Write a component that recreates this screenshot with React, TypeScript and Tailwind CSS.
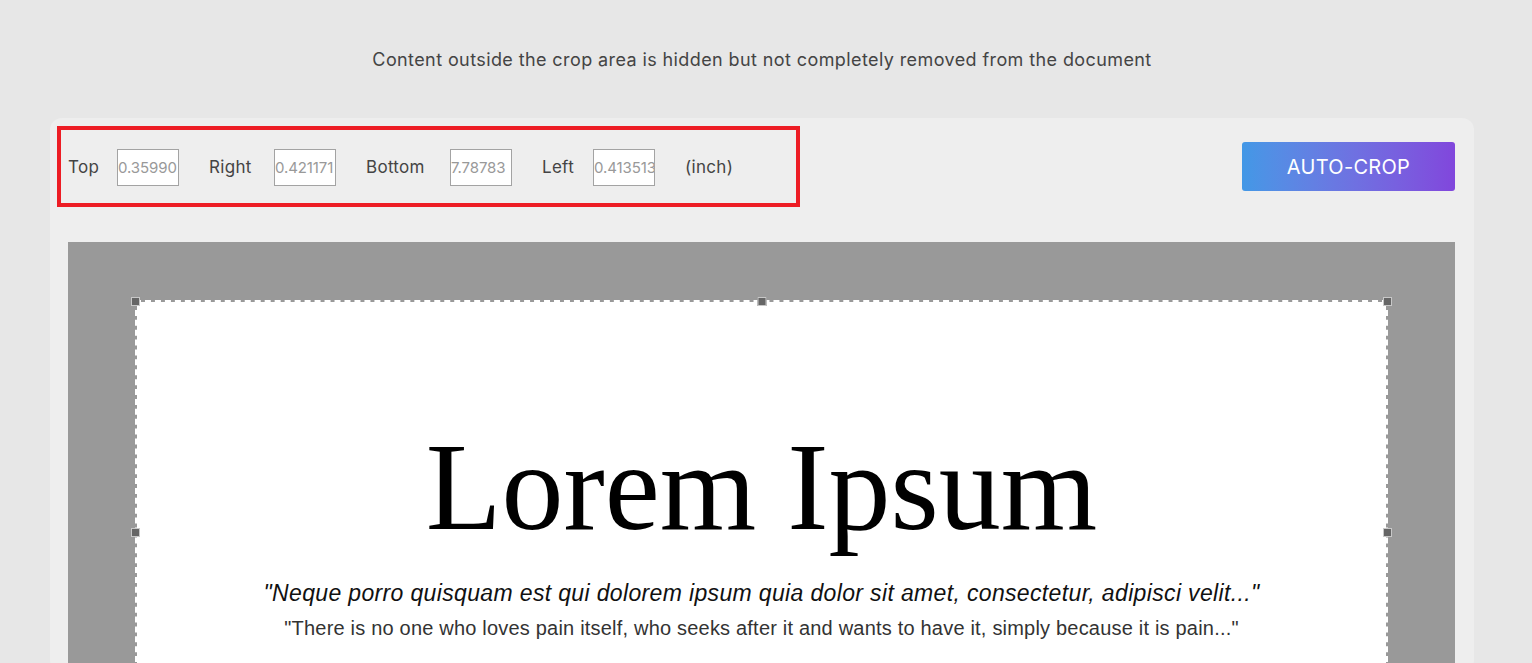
import React from 'react';

const values = [
  { label: 'Top', value: '0.35990', w: 'w-[49px]' },
  { label: 'Right', value: '0.421171', w: 'w-[65px]' },
  { label: 'Bottom', value: '7.78783', w: 'w-[84px]' },
  { label: 'Left', value: '0.413513', w: 'w-[51px]' },
];

// small square handle sitting on the crop border
const Handle = ({ className }: { className: string }) => (
  <div className={`absolute w-[9px] h-[9px] bg-[#666] border border-[#c8c8c8] ${className}`} />
);

const App: React.FC = () => {
  return (
    <div className="min-h-screen bg-[#e7e7e7] overflow-hidden font-['Inter',sans-serif]">
      <div className="w-[1424px] ml-[50px]">
        <p className="pt-[48px] text-center text-[18px] leading-[24px] text-[#444] tracking-[0.4px]">
          Content outside the crop area is hidden but not completely removed from the document
        </p>

        <div className="mt-[46px] rounded-[12px] bg-[#eeeeee] pt-[8px]">
          {/* settings row */}
          <div className="flex items-center justify-between pl-[7px] pr-[19px]">
            <div className="flex items-center h-[81px] w-[743px] border-4 border-[#ed1c24] pl-[7px] pt-[2px] text-[17px] tracking-[0.3px] text-[#444]">
              {values.map((v) => (
                <div key={v.label} className="flex items-center mr-[30px]">
                  <span className={v.w}>{v.label}</span>
                  <input
                    readOnly
                    value={v.value}
                    className="w-[62px] h-[37px] border border-[#a3a3a3] bg-white px-0 text-[15px] tracking-[-0.1px] text-[#999] outline-none"
                  />
                </div>
              ))}
              <span>(inch)</span>
            </div>
            <button className="w-[213px] h-[49px] rounded-[3px] bg-gradient-to-r from-[#4298e6] to-[#8146dc] text-white text-[20px] tracking-[0.3px]">
              AUTO-CROP
            </button>
          </div>

          {/* preview */}
          <div className="mt-[35px] ml-[18px] mr-[19px] bg-[#999999] pt-[58px] px-[67px] h-[430px]">
            <div className="relative h-full border-2 border-b-0 border-dashed border-white bg-white bg-clip-padding">
              <Handle className="-left-[6px] -top-[5px]" />
              <Handle className="left-1/2 -translate-x-1/2 -top-[5px]" />
              <Handle className="-right-[6px] -top-[5px]" />
              <Handle className="-left-[6px] top-[226px]" />
              <Handle className="-right-[6px] top-[226px]" />

              <div className="text-center">
                <h1 className="mt-[124px] font-['Liberation_Serif',serif] text-[124px] leading-none text-black">
                  Lorem Ipsum
                </h1>
                <p className="mt-[30px] font-['Liberation_Sans',Arial,sans-serif] italic text-[23px] tracking-[0.35px] leading-[26px] text-[#111]">
                  "Neque porro quisquam est qui dolorem ipsum quia dolor sit amet, consectetur, adipisci velit..."
                </p>
                <p className="mt-[9px] font-['Liberation_Sans',Arial,sans-serif] text-[20px] tracking-[0.2px] leading-[26px] text-[#333]">
                  "There is no one who loves pain itself, who seeks after it and wants to have it, simply because it is pain..."
                </p>
              </div>
            </div>
          </div>
        </div>
      </div>
    </div>
  );
};

export default App;
